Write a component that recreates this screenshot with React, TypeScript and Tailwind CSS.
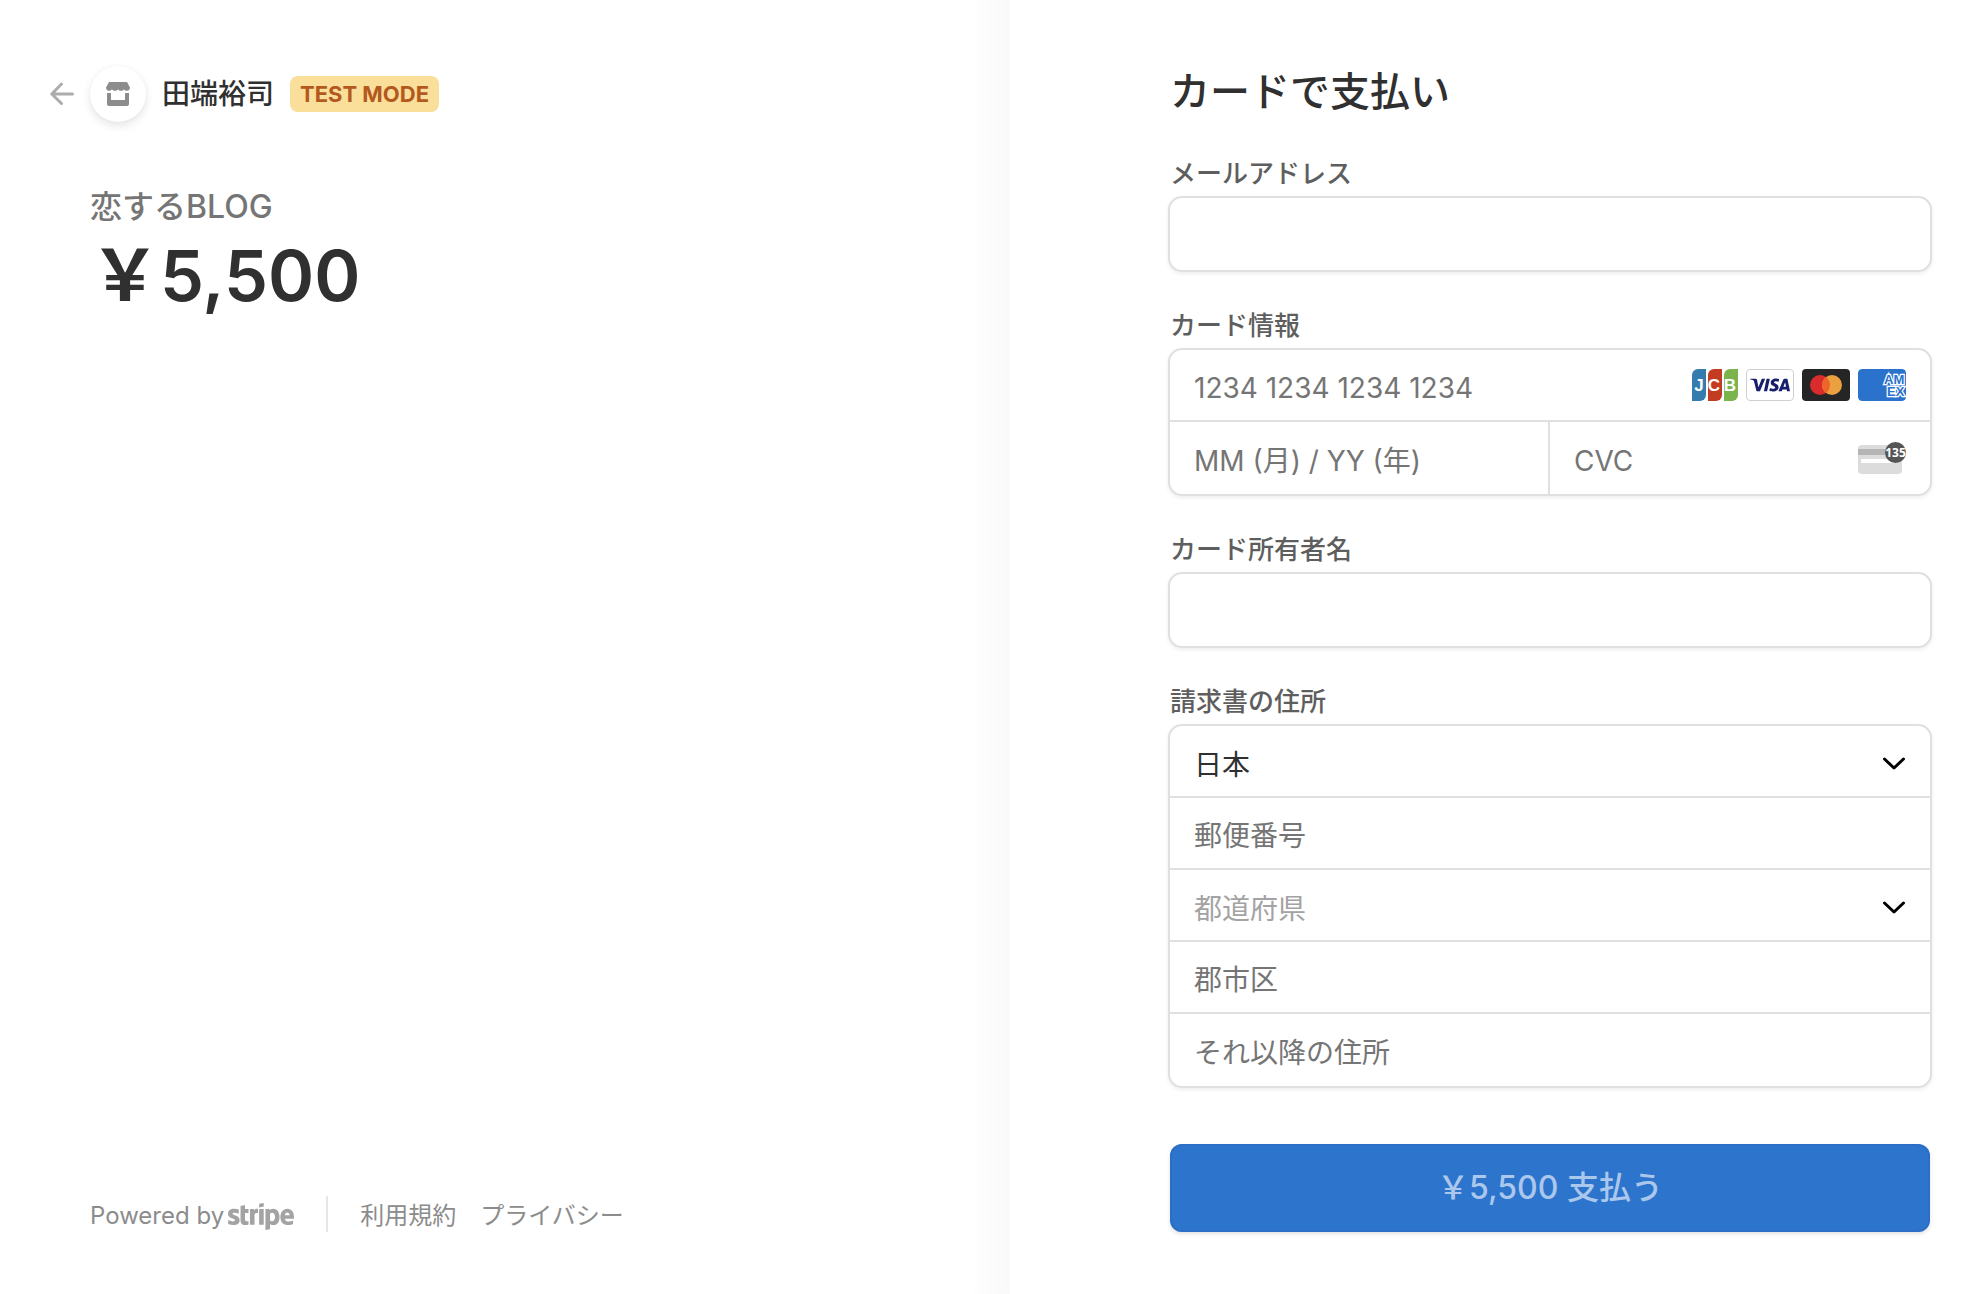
import { useState } from "react";
import type { ReactNode } from "react";
import { FaStripe } from "react-icons/fa6";
import { SiVisa } from "react-icons/si";
import cn from "clsx";

// full-width yen sign
const YEN = "\uFFE5";

const prefectures = ["北海道", "青森県", "宮城県", "東京都", "神奈川県", "愛知県", "京都府", "大阪府", "福岡県", "沖縄県"];

const inputStyles =
  "block h-18 w-full min-w-0 bg-transparent px-6 pt-1.5 text-[28px] placeholder:text-[#757575] focus:outline-none";

const boxStyles =
  "overflow-hidden rounded-[14px] border-2 border-[#e0e0e0] bg-white shadow-[0_2px_4px_rgba(0,0,0,0.07)]";

function JcbIcon() {
  return (
    <svg className="h-8 w-12" viewBox="0 0 48 32" role="img" aria-label="JCB">
      <path d="M6 0h8v26a6 6 0 0 1-6 6H0V6a6 6 0 0 1 6-6z" fill="#347cae" transform="translate(2 0)" />
      <path d="M6 0h8v26a6 6 0 0 1-6 6H0V6a6 6 0 0 1 6-6z" fill="#c33b20" transform="translate(18 0)" />
      <path d="M6 0h8v26a6 6 0 0 1-6 6H0V6a6 6 0 0 1 6-6z" fill="#7bb44d" transform="translate(34 0)" />
      <g fill="#fff" fontFamily="Liberation Sans, sans-serif" fontWeight="700" fontSize="17" textAnchor="middle">
        <text x="9" y="22">J</text>
        <text x="24" y="22">C</text>
        <text x="40" y="22">B</text>
      </g>
    </svg>
  );
}

function MastercardIcon() {
  return (
    <svg className="h-8 w-12" viewBox="0 0 48 32" role="img" aria-label="Mastercard">
      <rect width="48" height="32" rx="4" fill="#252525" />
      <circle cx="18" cy="16" r="10" fill="#da2c2c" />
      <circle cx="30" cy="16" r="10" fill="#eba040" />
      <path d="M24 8a10 10 0 0 1 0 16 10 10 0 0 1 0-16z" fill="#ee6529" />
    </svg>
  );
}

function AmexIcon() {
  return (
    <svg className="h-8 w-12 rounded" viewBox="0 0 48 32" role="img" aria-label="American Express">
      <rect width="48" height="32" rx="4" fill="#2a72cb" />
      <text
        fill="#2a72cb"
        stroke="#fff"
        strokeWidth="2.5"
        paintOrder="stroke"
        fontFamily="Liberation Sans, sans-serif"
        fontWeight="700"
        fontSize="13"
      >
        <tspan x="26" y="15">AM</tspan>
        <tspan x="29" y="27">EX</tspan>
      </text>
    </svg>
  );
}

function CvcIcon() {
  return (
    <svg className="h-8 w-12 shrink-0" viewBox="0 0 48 32" aria-hidden="true">
      <rect y="3" width="44" height="29" rx="4" fill="#dcdcdc" />
      <rect y="7" width="44" height="6" fill="#b5b5b5" />
      <rect x="3" y="17" width="34" height="4" fill="#fff" />
      <circle cx="37.5" cy="10.5" r="10.5" fill="#555" />
      <text
        x="37.5"
        y="15"
        fill="#fff"
        fontFamily="Open Sans, sans-serif"
        fontWeight="700"
        fontSize="12"
        textAnchor="middle"
      >
        135
      </text>
    </svg>
  );
}

function StoreIcon() {
  return (
    <svg className="h-6 w-6" viewBox="0 0 24 24" fill="#8c8c8c" aria-hidden="true">
      <path d="M3 0h18l3 5.500c0 2-1.400 3.300-3 3.300-1.300 0-2.300-.6-3-1.600-.7 1-1.700 1.600-3 1.600s-2.300-.6-3-1.600c-.7 1-1.700 1.600-3 1.600s-2.300-.6-3-1.600c-.7 1-1.700 1.600-3 1.600-1.600 0-3-1.300-3-3.300z" />
      <path d="M1 11h4v7h14v-7h4v11a2 2 0 0 1-2 2H3a2 2 0 0 1-2-2z" />
    </svg>
  );
}

function Chevron() {
  return (
    <svg
      className="pointer-events-none col-start-1 row-start-1 mr-6 h-4 w-6 self-center justify-self-end"
      viewBox="0 0 24 16"
      fill="none"
      stroke="#000"
      strokeWidth="3"
      strokeLinecap="round"
      strokeLinejoin="round"
      aria-hidden="true"
    >
      <path d="M2.500 5l9.500 9 9.500-9" />
    </svg>
  );
}

interface FieldProps {
  id: string;
  label: string;
  children: ReactNode;
}

function Field({ id, label, children }: FieldProps) {
  return (
    <div>
      <label htmlFor={id} className="mb-1 block px-0.5 text-[26px] leading-9 font-medium text-[#5e5e5e]">
        {label}
      </label>
      {children}
    </div>
  );
}

export default function App() {
  const [country, setCountry] = useState("JP");
  const [prefecture, setPrefecture] = useState("");

  return (
    <div
      lang="ja"
      className="flex min-h-screen bg-white font-['Inter','Noto_Sans_CJK_JP',sans-serif] text-[#303030]"
    >
      <section className="flex w-[calc(50%+16px)] flex-col bg-linear-to-l from-[#f9f9f9] to-white to-[40px] pt-[66px] pb-16 pl-[90px]">
        <header className="-ml-10 flex items-center">
          <a href="#back" aria-label="戻る" className="mr-4">
            <svg
              className="h-6 w-6"
              viewBox="0 0 24 24"
              fill="none"
              stroke="#acacac"
              strokeWidth="3"
              strokeLinecap="round"
              strokeLinejoin="round"
            >
              <path d="M22.500 12H2M11.500 2L1.800 12l9.700 9.500" />
            </svg>
          </a>
          <div className="flex h-14 w-14 items-center justify-center rounded-full bg-white shadow-[0_4px_10px_rgba(0,0,0,0.1),0_0_4px_rgba(0,0,0,0.03)]">
            <StoreIcon />
          </div>
          <h1 className="ml-4 text-[28px] leading-9 font-medium">田端裕司</h1>
          <span className="ml-4 rounded-lg bg-[#fadf9b] px-2.5 text-[22px] leading-9 font-bold text-[#b3591e]">
            TEST MODE
          </span>
        </header>

        <p className="mt-16 text-[32px] leading-[42px] font-medium text-[#757575]">恋するBLOG</p>
        <p className="text-[70px] leading-[96px] font-semibold">{YEN}5,500</p>

        <footer className="mt-auto flex h-9 items-center text-2xl text-[#8c8c8c]">
          <a href="#stripe" className="flex items-center gap-1 pt-1">
            <span>Powered by</span>
            <FaStripe className="h-[53px] w-[66px] text-[#a3a3a3]" aria-label="Stripe" />
          </a>
          <div className="mx-8 h-full w-0.5 bg-[#e6e6e6]" />
          <div className="flex gap-6 pt-1">
            <a href="#terms">利用規約</a>
            <a href="#privacy">プライバシー</a>
          </div>
        </footer>
      </section>

      <section className="flex-1 bg-white pt-17 pr-14 pb-16 pl-[158px]">
        <h2 className="mb-10 px-0.5 text-[40px] leading-[48px] font-medium">カードで支払い</h2>

        <form className="flex flex-col gap-9" onSubmit={(e) => e.preventDefault()}>
          <Field id="email" label="メールアドレス">
            <div className={boxStyles}>
              <input id="email" type="email" className={inputStyles} />
            </div>
          </Field>

          <Field id="card-number" label="カード情報">
            <div className={cn(boxStyles, "divide-y-2 divide-[#e0e0e0]")}>
              <div className="flex h-18 items-center pr-6">
                <input id="card-number" className={inputStyles} placeholder="1234 1234 1234 1234" />
                <div className="flex gap-2">
                  <JcbIcon />
                  <span className="flex h-8 w-12 items-center justify-center rounded border border-[#cfcfcf]">
                    <SiVisa className="h-10 w-10 shrink-0 text-[#171e6c]" aria-label="Visa" />
                  </span>
                  <MastercardIcon />
                  <AmexIcon />
                </div>
              </div>
              <div className="grid grid-cols-2 divide-x-2 divide-[#e0e0e0]">
                <input aria-label="有効期限" className={inputStyles} placeholder="MM (月) / YY (年)" />
                <div className="flex items-center pr-6">
                  <input aria-label="CVC" className={inputStyles} placeholder="CVC" />
                  <CvcIcon />
                </div>
              </div>
            </div>
          </Field>

          <Field id="name" label="カード所有者名">
            <div className={boxStyles}>
              <input id="name" className={inputStyles} />
            </div>
          </Field>

          <Field id="country" label="請求書の住所">
            <div className={cn(boxStyles, "divide-y-2 divide-[#e0e0e0]")}>
              <div className="grid h-18">
                <select
                  id="country"
                  value={country}
                  onChange={(e) => setCountry(e.target.value)}
                  className={cn(inputStyles, "col-start-1 row-start-1 appearance-none")}
                >
                  <option value="JP">日本</option>
                  <option value="US">アメリカ合衆国</option>
                </select>
                <Chevron />
              </div>
              <input aria-label="郵便番号" className={inputStyles} placeholder="郵便番号" />
              <div className="grid h-18">
                <select
                  aria-label="都道府県"
                  value={prefecture}
                  onChange={(e) => setPrefecture(e.target.value)}
                  className={cn(
                    inputStyles,
                    "col-start-1 row-start-1 appearance-none",
                    !prefecture && "text-[#a3a3a3]"
                  )}
                >
                  <option value="">都道府県</option>
                  {prefectures.map((p) => (
                    <option key={p} value={p}>
                      {p}
                    </option>
                  ))}
                </select>
                <Chevron />
              </div>
              <input aria-label="郡市区" className={inputStyles} placeholder="郡市区" />
              <input aria-label="それ以降の住所" className={inputStyles} placeholder="それ以降の住所" />
            </div>
          </Field>

          <button
            type="submit"
            className="mx-0.5 mt-5 h-22 rounded-xl bg-[#2d74cd] text-[32px] font-medium text-[#abc7eb] shadow-[0_2px_4px_rgba(0,0,0,0.12),inset_0_0_0_2px_rgba(40,105,190,0.5)]"
          >
            {YEN}5,500 支払う
          </button>
        </form>
      </section>
    </div>
  );
}
